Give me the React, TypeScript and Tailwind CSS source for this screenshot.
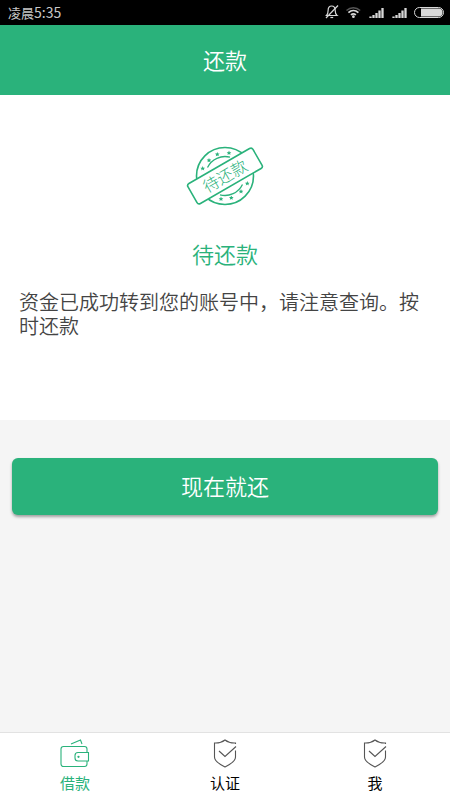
const GREEN = '#2ab27b';

const STARS = [
  [22.7, 33.5], [29, 25.3], [37.3, 19.3], [49, 18.0],
  [67.3, 48.5], [61, 56.5], [51.3, 62.8], [41, 64.0],
];

function StatusIcons() {
  return (
    <svg width="120" height="25" viewBox="0 0 120 25" fill="none" stroke="#d8d8d8" aria-hidden="true">
      <g strokeWidth="1.2">
        <path d="M2.500 15.500h10.500c-1.700-1.400-1.800-2.600-1.800-5 0-3-1.400-4.500-3.500-4.500s-3.600 1.500-3.600 4.500c0 2.400-.1 3.600-1.600 5z" />
        <path d="M2 18 14 5.500" />
        <path d="M6.400 17.500h2.800" />
      </g>
      <path d="M22.500 10.600c4-3.800 9.700-3.800 13.700 0" strokeWidth="1.400" stroke="#555" />
      <path d="M24.400 12.700c3-2.900 7-2.900 10 0M26.900 14.900c1.700-1.300 3.300-1.300 5 0" strokeWidth="1.700" />
      <circle cx="29.400" cy="16.700" r="1.400" fill="#d8d8d8" stroke="none" />
      {[45, 68].map((x) => (
        <path
          key={x}
          d={`M${x + 1.5} 18v-1.500M${x + 4.5} 18v-3M${x + 7.5} 18v-5M${x + 10.500} 18v-7.500M${x + 13.500} 18v-10`}
          strokeWidth="2.300"
        />
      ))}
      <rect x="90.500" y="7.500" width="29" height="10" rx="5" strokeWidth="1" />
      <path d="M97 8.500h17.500a4 4 0 0 1 0 8H97z" fill="#d8d8d8" stroke="none" />
    </svg>
  );
}

function Stamp() {
  return (
    <svg width="90" height="82" viewBox="0 0 90 82" fill="none" stroke={GREEN} aria-hidden="true">
      <circle cx="45" cy="41" r="28.500" strokeWidth="1.600" />
      <path d="M27.500 32.500A19.500 19.500 0 0 1 50 22.200M62.500 49.500A19.500 19.500 0 0 1 40 59.800" strokeWidth="1.300" />
      {STARS.map(([x, y]) => (
        <path
          key={`${x}-${y}`}
          transform={`translate(${x} ${y})`}
          d="M0-2.400.7-.8 2.300-.7 1.100.4 1.500 2 0 1.100-1.500 2-1.100.4-2.300-.7-.7-.8z"
          fill={GREEN}
          stroke="none"
        />
      ))}
      <g transform="rotate(-30 45 41)">
        <rect x="7.500" y="29.500" width="75" height="23" rx="2.500" fill="#fff" strokeWidth="1.600" />
        <text
          x="45"
          y="47"
          textAnchor="middle"
          fill={GREEN}
          stroke="none"
          className="text-[16px] font-light"
        >
          待还款
        </text>
      </g>
    </svg>
  );
}

function WalletIcon() {
  return (
    <svg width="30" height="30" viewBox="0 0 30 30" fill="none" stroke="currentColor" strokeWidth="1.100" aria-hidden="true">
      <path d="M27 14V10a2.500 2.500 0 0 0-2.500-2.500h-21A2.500 2.500 0 0 0 1 10v15a2.500 2.500 0 0 0 2.500 2.500h21A2.500 2.500 0 0 0 27 25v-3" />
      <path d="M28.500 13.500H18a3 3 0 0 0-3 3v2.500a3 3 0 0 0 3 3h10.500z" />
      <circle cx="18.500" cy="17.800" r=".6" />
      <path d="m11 5 9.500-4L22 5" />
    </svg>
  );
}

function ShieldIcon() {
  return (
    <svg width="30" height="30" viewBox="0 0 30 30" fill="none" stroke="#555" strokeWidth="1.100" aria-hidden="true">
      <path d="M25.500 5V4c-5 .3-7.500-.7-10.500-3-3 2.300-5.500 3.300-10.500 3V18c0 4.500 5.500 7.500 10.500 10 5-2.500 10.500-5.500 10.500-10v-6.500" />
      <path d="m9 12 6 5.500L26 7.500" />
    </svg>
  );
}

const TABS = [
  { label: '借款', icon: <WalletIcon />, active: true },
  { label: '认证', icon: <ShieldIcon />, active: false },
  { label: '我', icon: <ShieldIcon />, active: false },
];

export default function App() {
  return (
    <div className="flex min-h-screen flex-col bg-[#f5f5f5] font-['Noto_Sans_CJK_SC',sans-serif]">
      <div className="flex h-[25px] items-center justify-between bg-black pr-1.5 pl-2 text-[#c8c8c8]">
        <span className="text-[13px] leading-5">
          凌晨<span className="text-[14px]">5:35</span>
        </span>
        <StatusIcons />
      </div>
      <header className="flex h-[70px] items-center justify-center bg-[#2ab27b] pb-0.5">
        <h1 className="text-[22px] leading-8 font-[350] text-white">还款</h1>
      </header>
      <main className="flex grow flex-col">
        <section className="flex flex-col items-center bg-white px-[19px] pt-10 pb-[82px]">
          <Stamp />
          <h2 className="mt-5 text-[22px] leading-8 font-[350] text-[#2ab27b]">待还款</h2>
          <p className="mt-[21px] w-full text-[20px] leading-6 font-[350] text-[#444]">
            资金已成功转到您的账号中，请注意查询。按时还款
          </p>
        </section>
        <div className="px-3 pt-[38px]">
          <button
            type="button"
            className="h-[57px] w-full rounded-md bg-[#2ab27b] pb-1 text-[22px] leading-8 font-[350] text-white shadow-[0_2px_3px_rgba(0,0,0,0.35)]"
          >
            现在就还
          </button>
        </div>
      </main>
      <nav className="grid grid-cols-3 border-t border-[#e2e2e2] bg-white pt-1.5 pb-[7px]">
        {TABS.map((tab) => (
          <a
            key={tab.label}
            href="#"
            aria-current={tab.active ? 'page' : undefined}
            className={`flex flex-col items-center gap-1 ${tab.active ? 'text-[#2ab27b]' : 'text-black'}`}
          >
            {tab.icon}
            <span className="text-[15px] leading-5">{tab.label}</span>
          </a>
        ))}
      </nav>
    </div>
  );
}
